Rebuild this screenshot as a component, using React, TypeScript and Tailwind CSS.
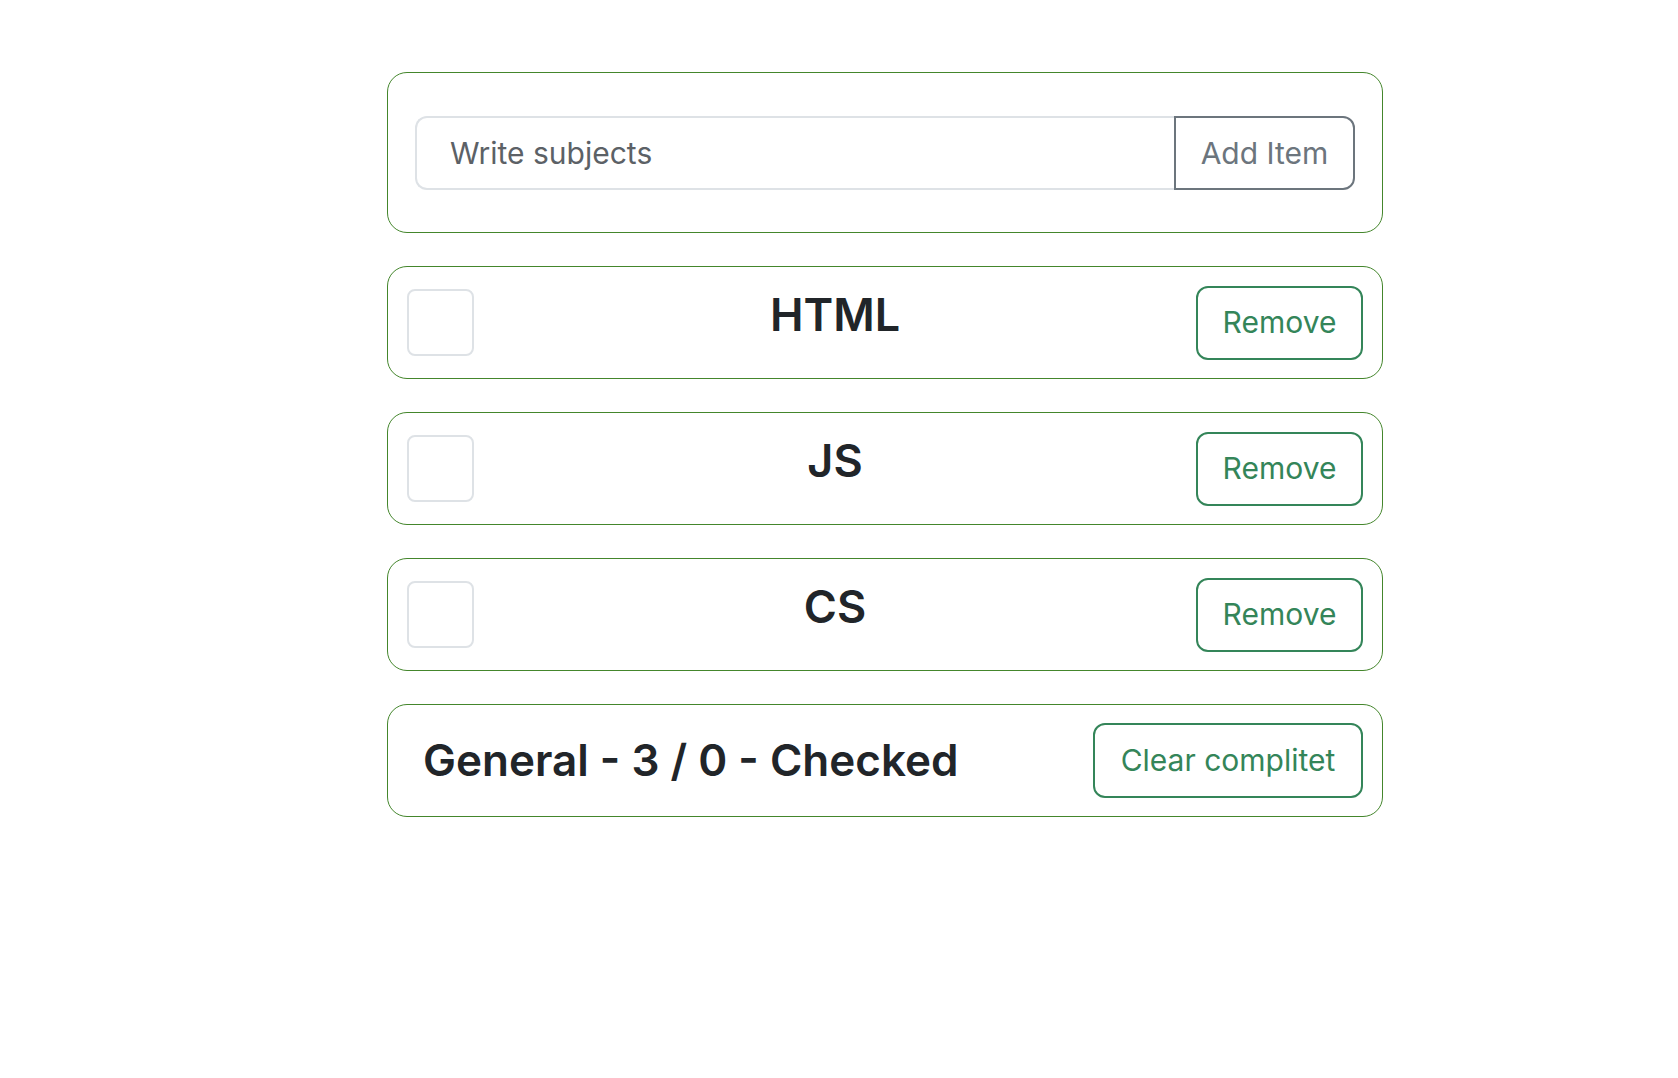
import React from "react";

const items = ["HTML", "JS", "CS"];

export default function App() {
  return (
    <div className="min-h-screen bg-white font-['Inter','Liberation_Sans',sans-serif] text-[#212529]">
      <div className="ml-[387px] pt-[72px] w-[996px] flex flex-col gap-[33px]">
        <div className="border border-[#44862c] rounded-[20px] px-[27px] pt-[43px] pb-[42px]">
          <div className="flex h-[74px]">
            <input
              placeholder="Write subjects"
              className="flex-1 min-w-0 border-2 border-r-0 border-[#dee2e6] rounded-l-[12px] pl-[33px] text-[30px] text-[#212529] placeholder:text-[#5c6166] outline-none bg-white"
            />
            <button className="w-[181px] border-2 border-[#6c757d] rounded-r-[12px] text-[#6c757d] text-[30px] bg-white">
              Add Item
            </button>
          </div>
        </div>

        {items.map((it) => (
          <div
            key={it}
            className="border border-[#44862c] rounded-[20px] h-[113px] flex items-center px-[19px]"
          >
            <div className="w-[67px] h-[67px] border-2 border-[#dee2e6] rounded-[8px] shrink-0" />
            <div className="flex-1 text-center text-[45px] font-semibold leading-[1.2] mb-[16px] text-[#212529]">
              {it}
            </div>
            <button className="w-[167px] h-[74px] border-2 border-[#348559] rounded-[12px] text-[#348559] text-[30px] bg-white shrink-0">
              Remove
            </button>
          </div>
        ))}

        <div className="border border-[#44862c] rounded-[20px] h-[113px] flex items-center pl-[35px] pr-[19px]">
          <div className="flex-1 text-[44px] font-semibold leading-[1.2] text-[#212529]">
            General - 3 / 0 - Checked
          </div>
          <button className="w-[270px] h-[75px] border-2 border-[#348559] rounded-[12px] text-[#348559] text-[30px] bg-white shrink-0">
            Clear complitet
          </button>
        </div>
      </div>
    </div>
  );
}
